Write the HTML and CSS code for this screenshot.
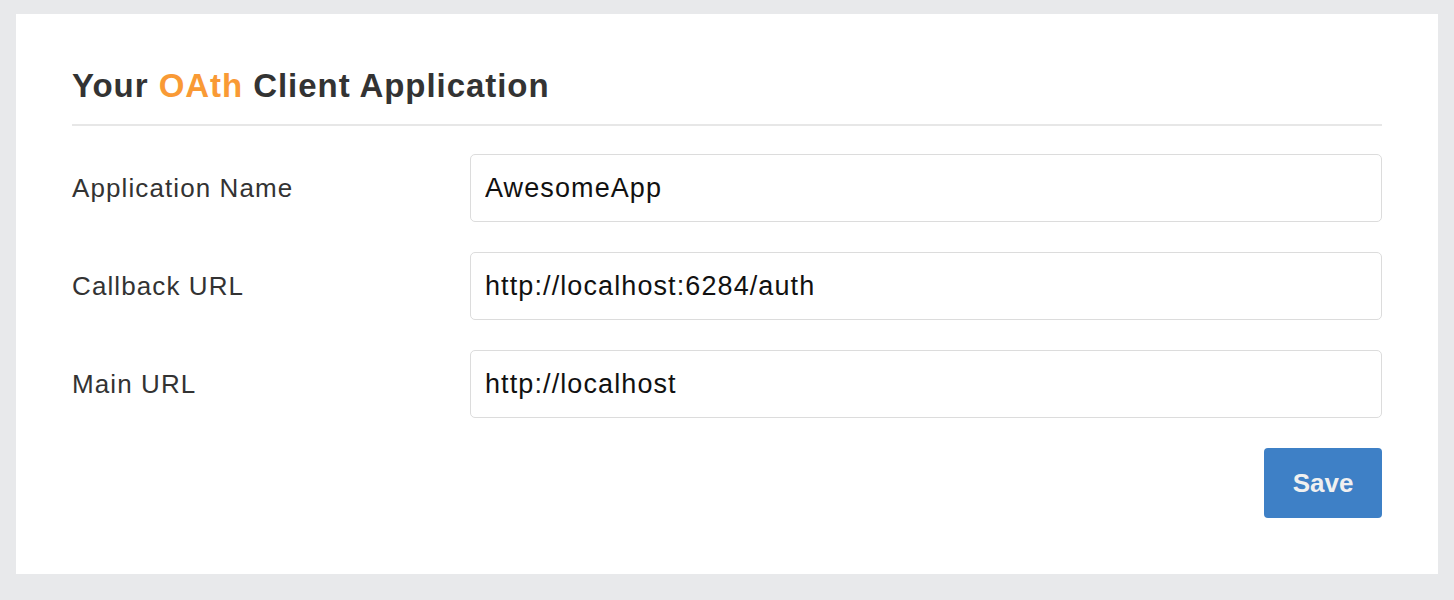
FILE: index.html
```html
<!DOCTYPE html>
<html lang="en">
<head>
<meta charset="utf-8">
<title>Your OAth Client Application</title>
<link rel="stylesheet" href="styles.css">
</head>
<body>
  <main class="panel">
    <h1 class="title">Your <span class="accent">OAth</span> Client Application</h1>
    <form class="form">
      <div class="row">
        <label class="label" for="app-name">Application Name</label>
        <input class="input" id="app-name" type="text" value="AwesomeApp">
      </div>
      <div class="row">
        <label class="label" for="callback">Callback URL</label>
        <input class="input" id="callback" type="text" value="http://localhost:6284/auth">
      </div>
      <div class="row">
        <label class="label" for="main-url">Main URL</label>
        <input class="input" id="main-url" type="text" value="http://localhost">
      </div>
      <div class="actions">
        <button class="btn" type="button">Save</button>
      </div>
    </form>
  </main>
</body>
</html>
```

FILE: styles.css
```css
html, body {
  margin: 0;
  padding: 0;
}

body {
  background: #e8e9eb;
  padding: 14px 16px 26px;
  font-family: "Liberation Sans", Arial, Helvetica, sans-serif;
  color: #333333;
}

.panel {
  background: #ffffff;
  padding: 54px 56px 56px;
  height: 560px;
  box-sizing: border-box;
}

.title {
  margin: 0;
  font-size: 33px;
  line-height: 36px;
  font-weight: bold;
  letter-spacing: 0.95px;
  color: #333333;
  padding-bottom: 20px;
  border-bottom: 2px solid #e7e7e7;
}

.accent {
  color: #f99a35;
}

.form {
  display: flex;
  flex-direction: column;
  gap: 30px;
  padding-top: 28px;
}

.row {
  display: flex;
  align-items: stretch;
}

.label {
  width: 398px;
  flex: none;
  font-size: 26px;
  line-height: 68px;
  letter-spacing: 1.1px;
  color: #333333;
}

.input {
  flex: 1;
  min-width: 0;
  height: 68px;
  box-sizing: border-box;
  border: 1px solid #dcdcdc;
  border-radius: 5px;
  padding: 0 14px;
  font-family: "Liberation Sans", Arial, Helvetica, sans-serif;
  font-size: 27px;
  letter-spacing: 1.1px;
  color: #111111;
  background: #ffffff;
  outline: none;
}

.actions {
  display: flex;
  justify-content: flex-end;
}

.btn {
  width: 118px;
  height: 70px;
  border: none;
  border-radius: 4px;
  background: #3e80c6;
  color: #f0f0f0;
  font-family: "Liberation Sans", Arial, Helvetica, sans-serif;
  font-size: 26px;
  font-weight: bold;
  padding: 0;
  cursor: pointer;
}
```
